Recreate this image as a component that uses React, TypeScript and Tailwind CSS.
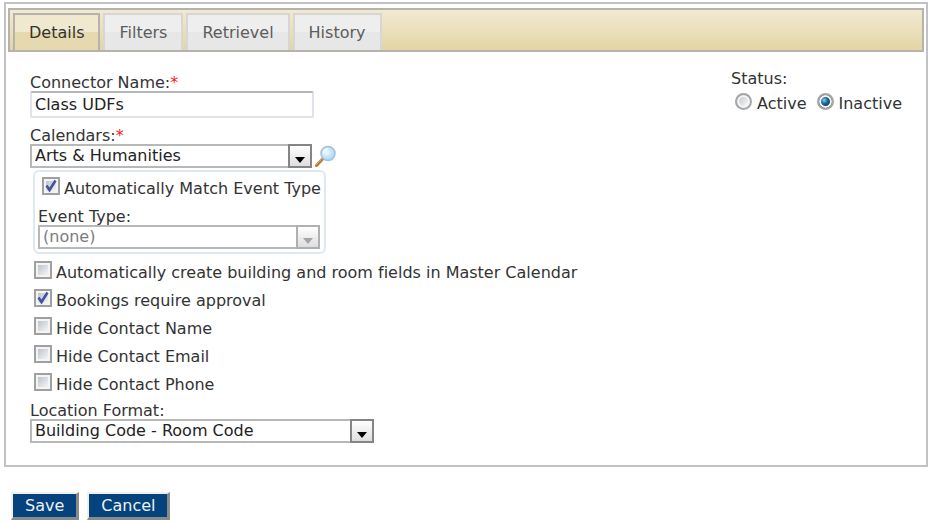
import { useState, type ReactNode } from "react";

const tabs = ["Details", "Filters", "Retrievel", "History"];

function Tab({ label, active, onSelect }: { label: string; active: boolean; onSelect: () => void }) {
  return (
    <button
      type="button"
      role="tab"
      aria-selected={active}
      onClick={onSelect}
      className={
        active
          ? "h-full border-2 border-b-0 border-[#b5b3ab] bg-linear-to-b from-[#f0e9d0] from-50% to-[#e6d9af] to-50% px-[14px] text-[#333]"
          : "h-full border-2 border-b-0 border-[#d6d6d6] bg-linear-to-b from-[#eeeeee] from-50% to-[#e7e7e7] to-50% px-[14px] text-[#5c5c5c]"
      }
    >
      {label}
    </button>
  );
}

function Required() {
  return <span className="text-[#ff2020]">*</span>;
}

function SelectBox({ id, value, disabled, className }: { id: string; value: string; disabled?: boolean; className: string }) {
  return (
    <div className={`relative h-6 ${className}`}>
      <select
        id={id}
        disabled={disabled}
        className="h-full w-full appearance-none border-2 border-[#b8b8b8] bg-white pr-7 pl-[3px] leading-5 text-[#222] opacity-100 disabled:text-[#7c7c7c]"
      >
        <option>{value}</option>
      </select>
      <span
        className={`pointer-events-none absolute inset-y-0 right-0 flex w-6 items-end justify-center border-2 bg-linear-to-b from-white to-[#dedede] pb-[3px] ${
          disabled ? "border-[#b0b0b0] text-[#a4a4a4]" : "border-[#858585] text-black"
        }`}
      >
        <svg width="10" height="6" viewBox="0 0 10 6" aria-hidden="true">
          <path d="M0 0h10L5 6z" fill="currentColor" />
        </svg>
      </span>
    </div>
  );
}

function CheckRow({ label, defaultChecked }: { label: ReactNode; defaultChecked?: boolean }) {
  return (
    <label className="flex h-7 items-start gap-1">
      <span className="relative mt-[2px] size-[18px] shrink-0">
        <input
          type="checkbox"
          defaultChecked={defaultChecked}
          className="peer block size-full appearance-none border-2 border-[#a0a0a0] bg-linear-to-br from-[#b4bac4] to-white shadow-[inset_0_0_0_2px_#f4f4f4]"
        />
        <svg
          className="pointer-events-none absolute inset-0 hidden peer-checked:block"
          width="18"
          height="18"
          viewBox="0 0 18 18"
          fill="none"
          aria-hidden="true"
        >
          <path d="M4.500 8.500 7.500 13 13.500 3.500" stroke="#3f559f" strokeWidth="2.600" />
        </svg>
      </span>
      <span className="leading-7">{label}</span>
    </label>
  );
}

function StatusRadio({ label, defaultChecked }: { label: string; defaultChecked?: boolean }) {
  return (
    <label className="flex items-start gap-[5px]">
      <input
        type="radio"
        name="status"
        defaultChecked={defaultChecked}
        className="size-[17px] appearance-none rounded-full border-2 border-[#a6a6a6] bg-linear-to-br from-[#bfc4ca] to-white shadow-[inset_0_0_0_2px_#f6f6f6] checked:bg-[radial-gradient(circle_at_40%_40%,#7fd0f2_0,#1f6d9c_30%,#123955_60%)]"
      />
      <span className="leading-[22px]">{label}</span>
    </label>
  );
}

function Magnifier() {
  return (
    <svg width="22" height="22" viewBox="0 0 22 22" fill="none" aria-hidden="true">
      <defs>
        <radialGradient id="lens" cx="0.4" cy="0.4" r="0.6">
          <stop offset="0" stopColor="#f0faff" />
          <stop offset="1" stopColor="#a5d8f6" />
        </radialGradient>
      </defs>
      <path d="M1.500 20.500 8 13.500" stroke="#b87333" strokeWidth="3" strokeLinecap="round" />
      <path d="M1.500 19.500 7.500 13" stroke="#eeb267" strokeWidth="1" strokeLinecap="round" />
      <circle cx="13" cy="8.500" r="7" fill="url(#lens)" stroke="#a4bfdc" strokeWidth="1.500" />
      <path d="M8.500 8.500a4.500 4.500 0 0 1 4.500-4.500" stroke="#fff" strokeWidth="1.500" />
    </svg>
  );
}

function ActionButton({ label }: { label: string }) {
  return (
    <button
      type="button"
      className="h-7 border-t-2 border-r-3 border-b-3 border-l-2 border-t-[#eef1f4] border-r-[#8a8a8a] border-b-[#8a8a8a] border-l-[#eef1f4] bg-[#04437d] px-3 leading-5 text-[#f0f0f0]"
    >
      {label}
    </button>
  );
}

export default function App() {
  const [current, setCurrent] = useState("Details");
  return (
    <main className="bg-white pt-[2px] pr-[7px] pl-1 font-['DejaVu_Sans',Verdana,sans-serif] text-base leading-4 text-[#333] [font-variant-ligatures:none]">
      <section className="border-2 border-[#c2c2c2] px-[2px] pt-1 pb-[22px]">
        <div role="tablist" className="flex h-11 gap-[3px] border-2 border-[#b5b3ab] bg-linear-to-b from-[#f1ead2] to-[#e4d5a5] pt-[3px] pl-[3px]">
          {tabs.map((tab) => (
            <Tab key={tab} label={tab} active={tab === current} onSelect={() => setCurrent(tab)} />
          ))}
        </div>

        <form className="flex items-start justify-between pt-[23px] pr-[22px] pl-[22px]">
          <div>
            <label htmlFor="connector" className="block">
              Connector Name:
              <Required />
            </label>
            <input
              id="connector"
              defaultValue="Class UDFs"
              className="block h-[27px] w-[284px] rounded-xs border-2 border-[#e2e3ea] border-t-[#b5b6bb] px-[3px] text-[#222]"
            />

            <label htmlFor="calendars" className="mt-[10px] block">
              Calendars:
              <Required />
            </label>
            <div className="flex gap-[3px]">
              <SelectBox id="calendars" value="Arts & Humanities" className="w-[282px]" />
              <button type="button" aria-label="Search calendars">
                <Magnifier />
              </button>
            </div>

            <fieldset className="mt-[2px] ml-[3px] h-[84px] w-[293px] rounded-md border-2 border-[#dfe7ef] px-[3px] pt-[3px]">
              <div className="pl-1">
                <CheckRow label="Automatically Match Event Type" defaultChecked />
              </div>
              <label htmlFor="event-type" className="mt-[6px] block">
                Event Type:
              </label>
              <SelectBox id="event-type" value="(none)" disabled className="w-[282px]" />
            </fieldset>

            <div className="mt-[5px] pl-1">
              <CheckRow label="Automatically create building and room fields in Master Calendar" />
              <CheckRow label="Bookings require approval" defaultChecked />
              <CheckRow label="Hide Contact Name" />
              <CheckRow label="Hide Contact Email" />
              <CheckRow label="Hide Contact Phone" />
            </div>

            <label htmlFor="location" className="mt-1 block">
              Location Format:
            </label>
            <SelectBox id="location" value="Building Code - Room Code" className="w-[344px]" />
          </div>

          <fieldset className="-mt-1">
            <legend>Status:</legend>
            <div className="mt-[6px] flex gap-[10px] pl-1">
              <StatusRadio label="Active" />
              <StatusRadio label="Inactive" defaultChecked />
            </div>
          </fieldset>
        </form>
      </section>

      <div className="mt-[25px] flex gap-2 pl-[7px]">
        <ActionButton label="Save" />
        <ActionButton label="Cancel" />
      </div>
    </main>
  );
}
